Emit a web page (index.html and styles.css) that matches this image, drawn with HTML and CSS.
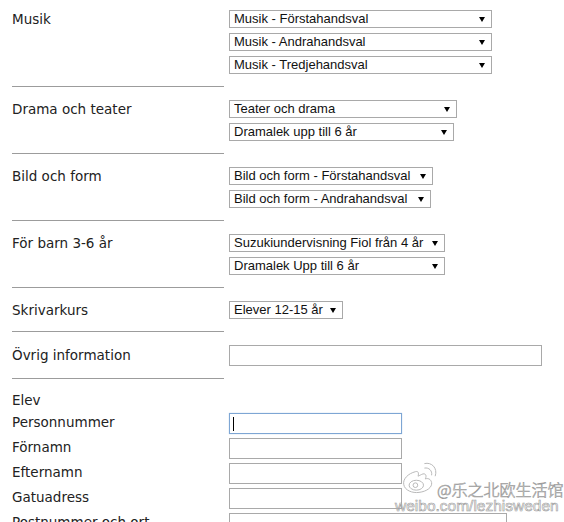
FILE: index.html
```html
<!DOCTYPE html>
<html lang="sv">
<head>
<meta charset="utf-8">
<title>Anmälan</title>
<link rel="stylesheet" href="styles.css">
</head>
<body>
<div class="form">
  <div class="section">
    <div class="label">Musik</div>
    <div class="controls">
      <span class="sel w-263"><select><option>Musik - Förstahandsval</option></select></span>
      <span class="sel w-263"><select><option>Musik - Andrahandsval</option></select></span>
      <span class="sel w-263"><select><option>Musik - Tredjehandsval</option></select></span>
    </div>
  </div>
  <div class="rule"></div>
  <div class="section">
    <div class="label">Drama och teater</div>
    <div class="controls">
      <span class="sel w-228"><select><option>Teater och drama</option></select></span>
      <span class="sel w-225"><select><option>Dramalek upp till 6 år</option></select></span>
    </div>
  </div>
  <div class="rule"></div>
  <div class="section">
    <div class="label">Bild och form</div>
    <div class="controls">
      <span class="sel w-204"><select><option>Bild och form - Förstahandsval</option></select></span>
      <span class="sel w-202"><select><option>Bild och form - Andrahandsval</option></select></span>
    </div>
  </div>
  <div class="rule"></div>
  <div class="section">
    <div class="label">För barn 3-6 år</div>
    <div class="controls">
      <span class="sel w-216"><select><option>Suzukiundervisning Fiol från 4 år</option></select></span>
      <span class="sel w-216"><select><option>Dramalek Upp till 6 år</option></select></span>
    </div>
  </div>
  <div class="rule"></div>
  <div class="section">
    <div class="label">Skrivarkurs</div>
    <div class="controls">
      <span class="sel w-114"><select><option>Elever 12-15 år</option></select></span>
    </div>
  </div>
  <div class="rule"></div>
  <div class="section">
    <div class="label label-input">Övrig information</div>
    <div class="controls">
      <input class="text w-313" type="text">
    </div>
  </div>
  <div class="rule"></div>
  <div class="elev-title">Elev</div>
  <div class="row">
    <div class="label label-row">Personnummer</div>
    <span class="focus-wrap"><input class="text w-173 focused" type="text"></span>
  </div>
  <div class="row">
    <div class="label label-row">Förnamn</div>
    <input class="text w-173" type="text">
  </div>
  <div class="row">
    <div class="label label-row">Efternamn</div>
    <input class="text w-173" type="text">
  </div>
  <div class="row">
    <div class="label label-row">Gatuadress</div>
    <input class="text w-173" type="text">
  </div>
  <div class="row">
    <div class="label label-row">Postnummer och ort</div>
    <input class="text w-278" type="text">
  </div>
</div>

<div class="watermark">
  <div class="wm-top">
    <svg class="wm-logo" width="36" height="38" viewBox="0 0 40 38" fill="none" stroke="#b8b8b8" stroke-width="1.1">
      <path d="M16 12 C8 14 2 20 3 26 C4 33 13 36 20 35 C29 34 35 29 34 24 C33 20 30 19 27 20 C29 16 27 13 23 15 C21 16 19 17 19 17 C20 13 19 11 16 12 Z"/>
      <ellipse cx="17" cy="27" rx="8" ry="5.5"/>
      <circle cx="16" cy="27" r="2.6"/>
      <path d="M26 8 C31 7 35 11 34 16"/>
      <path d="M26 3 C34 1 41 8 38 17"/>
    </svg>
    <div class="wm-cn">@乐之北欧生活馆</div>
  </div>
  <div class="wm-url">weibo.com/lezhisweden</div>
</div>
</body>
</html>
```

FILE: styles.css
```css
html, body {
  margin: 0;
  padding: 0;
  background: #fff;
}

body {
  position: relative;
  width: 564px;
  height: 522px;
  overflow: hidden;
}

.form {
  padding: 10px 0 0 12px;
  font-family: "DejaVu Sans", Verdana, sans-serif;
  font-size: 13.5px;
  color: #222;
}

.section {
  display: flex;
  align-items: flex-start;
}

.label {
  width: 217px;
  flex: 0 0 217px;
  line-height: 18px;
}

.label-input {
  line-height: 21px;
}

.label-row {
  line-height: 19px;
}

.controls {
  display: flex;
  flex-direction: column;
  align-items: flex-start;
  gap: 5px;
}

.sel {
  position: relative;
  display: block;
  height: 18px;
}

.sel select {
  -webkit-appearance: none;
  appearance: none;
  display: block;
  width: 100%;
  height: 18px;
  box-sizing: border-box;
  margin: 0;
  padding: 0 0 0 4px;
  border: 1px solid #a9a9a9;
  border-radius: 0;
  background: #fff;
  color: #111;
  font-family: "Liberation Sans", Arial, sans-serif;
  font-size: 13px;
  line-height: 16px;
  outline: none;
}

.sel::after {
  content: "";
  position: absolute;
  right: 7px;
  top: 7px;
  width: 0;
  height: 0;
  border-left: 3px solid transparent;
  border-right: 3px solid transparent;
  border-top: 5px solid #000;
  pointer-events: none;
}

.w-263 { width: 263px; }
.w-228 { width: 228px; }
.w-225 { width: 225px; }
.w-204 { width: 204px; }
.w-202 { width: 202px; }
.w-216 { width: 216px; }
.w-114 { width: 114px; }
.w-313 { width: 313px; }
.w-173 { width: 173px; }
.w-278 { width: 278px; }

.rule {
  width: 212px;
  height: 0;
  border-top: 1px solid #9c9c9c;
  margin: 12px 0 13px 0;
}

.text {
  display: block;
  height: 21px;
  box-sizing: border-box;
  margin: 0;
  padding: 0 3px;
  border: 1px solid #a9a9a9;
  border-radius: 0;
  background: #fff;
  font-family: "Liberation Sans", Arial, sans-serif;
  font-size: 13px;
  outline: none;
}

.text.focused {
  border-color: #7ea6d4;
  box-shadow: 0 0 1px #a9c6e8;
}

.focus-wrap {
  position: relative;
  display: block;
}

.focus-wrap::after {
  content: "";
  position: absolute;
  left: 4px;
  top: 4px;
  width: 1px;
  height: 14px;
  background: #000;
}

.elev-title {
  line-height: 16px;
  margin-bottom: 5px;
}

.row {
  display: flex;
  align-items: flex-start;
  margin-bottom: 4px;
}

.watermark {
  position: absolute;
  left: 395px;
  top: 457px;
  pointer-events: none;
  color: rgba(255, 255, 255, 0.6);
  -webkit-text-stroke: 0.6px #999;
  white-space: nowrap;
}

.wm-top {
  display: flex;
  align-items: flex-end;
  height: 40px;
}

.wm-logo {
  display: block;
  margin-left: 6px;
  flex: 0 0 auto;
}

.wm-cn {
  font-family: "Noto Sans CJK SC", sans-serif;
  font-weight: 300;
  font-size: 16px;
  line-height: 16px;
}

.wm-url {
  margin-top: 1px;
  font-family: "Liberation Sans", Arial, sans-serif;
  font-size: 15.5px;
  line-height: 16px;
}
```
